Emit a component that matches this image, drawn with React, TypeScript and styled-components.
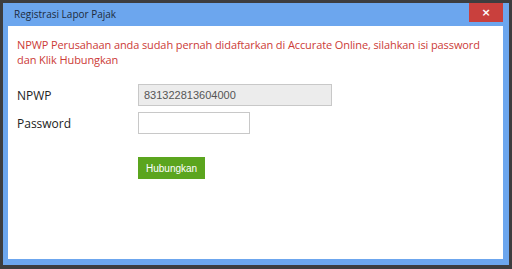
import React from 'react';
import styled, { createGlobalStyle } from 'styled-components';

const GlobalStyle = createGlobalStyle`
  html, body {
    margin: 0;
    padding: 0;
    background: #3d3d3f;
  }
  * {
    box-sizing: border-box;
  }
`;

const Screen = styled.div`
  width: 512px;
  height: 269px;
  padding: 3px 3px 4px 3px;
  background: #3d3d3f;
`;

const Dialog = styled.div`
  display: flex;
  flex-direction: column;
  height: 100%;
  background: #6ca6ee;
  padding: 0 6px 6px 5px;
`;

const TitleBar = styled.div`
  display: flex;
  align-items: flex-start;
  justify-content: space-between;
  height: 23px;
`;

const Title = styled.span`
  font-family: "Open Sans", sans-serif;
  font-size: 10px;
  color: #1d2b3c;
  line-height: 23px;
  padding-left: 6px;
`;

const CloseButton = styled.button`
  width: 34px;
  height: 19px;
  border: none;
  padding: 0;
  background: #c9403d;
  color: #fff;
  font-family: "DejaVu Sans", sans-serif;
  font-weight: bold;
  font-size: 11px;
  line-height: 19px;
`;

const Body = styled.div`
  flex: 1;
  background: #fff;
  padding: 11px 9px;
`;

const Notice = styled.p`
  margin: 0 0 17px 0;
  font-family: "Open Sans", sans-serif;
  font-size: 11px;
  line-height: 15px;
  letter-spacing: -0.1px;
  color: #cc3b37;
`;

const Row = styled.div`
  display: flex;
  align-items: center;
  margin-bottom: 6px;
`;

const Label = styled.label`
  width: 121px;
  font-family: "Open Sans", sans-serif;
  font-size: 12px;
  color: #222;
`;

const Input = styled.input<{ $width: number }>`
  width: ${(p) => p.$width}px;
  height: 22px;
  border: 1px solid #c8c8c8;
  background: #fff;
  padding: 0 5px;
  font-family: "Liberation Sans", Arial, sans-serif;
  font-size: 11px;
  color: #555;
  outline: none;

  &:read-only {
    background: #ececec;
  }
`;

const Actions = styled.div`
  padding-left: 121px;
  padding-top: 17px;
`;

const ConnectButton = styled.button`
  height: 22px;
  padding: 0 8px;
  border: none;
  background: #5ba51e;
  color: #fff;
  font-family: "Liberation Sans", Arial, sans-serif;
  font-size: 10px;
`;

export default function App() {
  return (
    <>
      <GlobalStyle />
      <Screen>
        <Dialog>
          <TitleBar>
            <Title>Registrasi Lapor Pajak</Title>
            <CloseButton>×</CloseButton>
          </TitleBar>
          <Body>
            <Notice>
              NPWP Perusahaan anda sudah pernah didaftarkan di Accurate Online, silahkan isi password dan Klik Hubungkan
            </Notice>
            <Row>
              <Label>NPWP</Label>
              <Input $width={194} readOnly value="831322813604000" />
            </Row>
            <Row>
              <Label>Password</Label>
              <Input $width={112} type="password" />
            </Row>
            <Actions>
              <ConnectButton>Hubungkan</ConnectButton>
            </Actions>
          </Body>
        </Dialog>
      </Screen>
    </>
  );
}
